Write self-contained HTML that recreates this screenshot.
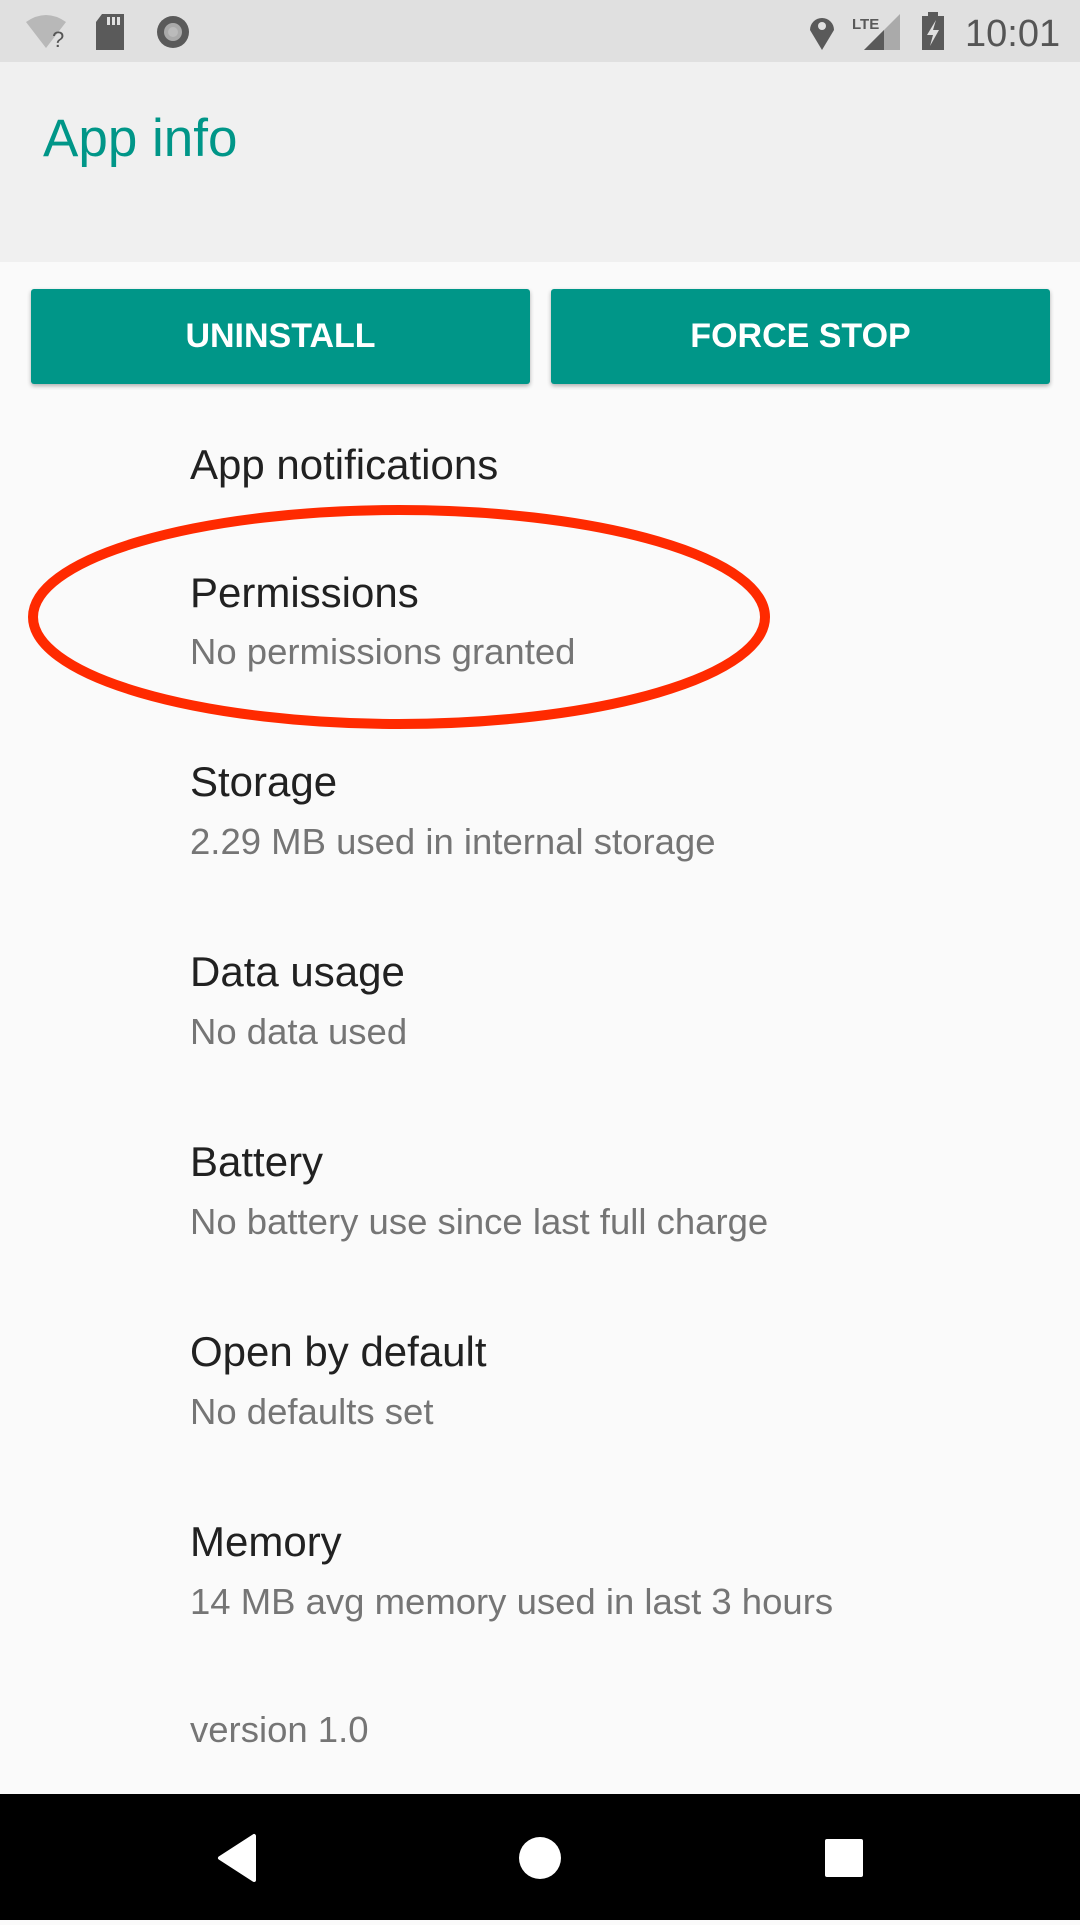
<!DOCTYPE html>
<html><head><meta charset="utf-8"><style>
body{margin:0;width:1080px;height:1920px;position:relative;background:#fafafa;font-family:"Liberation Sans",sans-serif;overflow:hidden}
.sb{position:absolute;left:0;top:0;width:1080px;height:62px;background:#e0e0e0}
.tb{position:absolute;left:0;top:62px;width:1080px;height:200px;background:#f0f0f0}
.title{position:absolute;left:43px;top:108px;font-size:53px;color:#009688}
.btn{position:absolute;top:289px;height:95px;width:499px;background:#009688;border-radius:3px;box-shadow:0 2px 4px rgba(0,0,0,.3);color:#fff;font-size:34px;font-weight:bold;text-align:center;line-height:95px}
.t{position:absolute;left:190px;font-size:42px;color:#212121}
.s{position:absolute;left:190px;font-size:36.5px;color:#757575}
.nav{position:absolute;left:0;top:1794px;width:1080px;height:126px;background:#000}
</style></head><body>
<div class="sb">
<svg width="1080" height="62" style="position:absolute;left:0;top:0">
<path d="M26 22 Q46 8 66 22 L46 48 Z" fill="#b8b8b8"/>
<text x="52" y="47" font-size="22" fill="#555" font-family="Liberation Sans">?</text>
<path d="M102 14 H124 V50 H96 V22 Z" fill="#5a5a5a"/>
<rect x="107" y="17" width="3" height="8" fill="#e0e0e0"/><rect x="112" y="17" width="3" height="8" fill="#e0e0e0"/><rect x="117" y="17" width="3" height="8" fill="#e0e0e0"/>
<circle cx="173" cy="32" r="16" fill="#5a5a5a"/><circle cx="173" cy="32" r="9" fill="#aaa"/><circle cx="173" cy="32" r="5" fill="#bbb"/>
<path d="M822 50 L810 30 A12 12 0 1 1 834 30 Z" fill="#5a5a5a"/><circle cx="822" cy="26" r="4" fill="#e0e0e0"/>
<text x="852" y="29" font-size="15" font-weight="bold" fill="#5a5a5a" font-family="Liberation Sans">LTE</text>
<path d="M864 50 L900 14 V50 Z" fill="#aaa"/><path d="M864 50 L884 30 V50 Z" fill="#5a5a5a"/>
<rect x="922" y="16" width="22" height="34" fill="#5a5a5a"/><rect x="928" y="12" width="10" height="5" fill="#5a5a5a"/>
<path d="M936 20 L927 35 H933 L930 46 L939 30 H933 Z" fill="#e0e0e0"/>
<text x="965" y="46" font-size="38" fill="#555" font-family="Liberation Sans">10:01</text>
</svg></div>
<div class="tb"></div>
<div class="title">App info</div>
<div class="btn" style="left:31px">UNINSTALL</div>
<div class="btn" style="left:551px">FORCE STOP</div>
<div class="t" style="top:441px">App notifications</div>
<div class="t" style="top:569px">Permissions</div>
<div class="s" style="top:631px">No permissions granted</div>
<div class="t" style="top:758px">Storage</div>
<div class="s" style="top:821px">2.29 MB used in internal storage</div>
<div class="t" style="top:948px">Data usage</div>
<div class="s" style="top:1011px">No data used</div>
<div class="t" style="top:1138px">Battery</div>
<div class="s" style="top:1201px">No battery use since last full charge</div>
<div class="t" style="top:1328px">Open by default</div>
<div class="s" style="top:1391px">No defaults set</div>
<div class="t" style="top:1518px">Memory</div>
<div class="s" style="top:1581px">14 MB avg memory used in last 3 hours</div>
<div class="s" style="top:1709px">version 1.0</div>
<svg width="1080" height="1920" style="position:absolute;left:0;top:0">
<ellipse cx="399" cy="617" rx="366" ry="107" fill="none" stroke="#ff2a00" stroke-width="10"/>
</svg>
<div class="nav"><svg width="1080" height="126">
<path d="M254 42 V86 L220 64 Z" fill="#fff" stroke="#fff" stroke-width="4" stroke-linejoin="round"/>
<circle cx="540" cy="64" r="21" fill="#fff"/>
<rect x="825" y="45" width="38" height="38" rx="2" fill="#fff"/>
</svg></div>
</body></html>
